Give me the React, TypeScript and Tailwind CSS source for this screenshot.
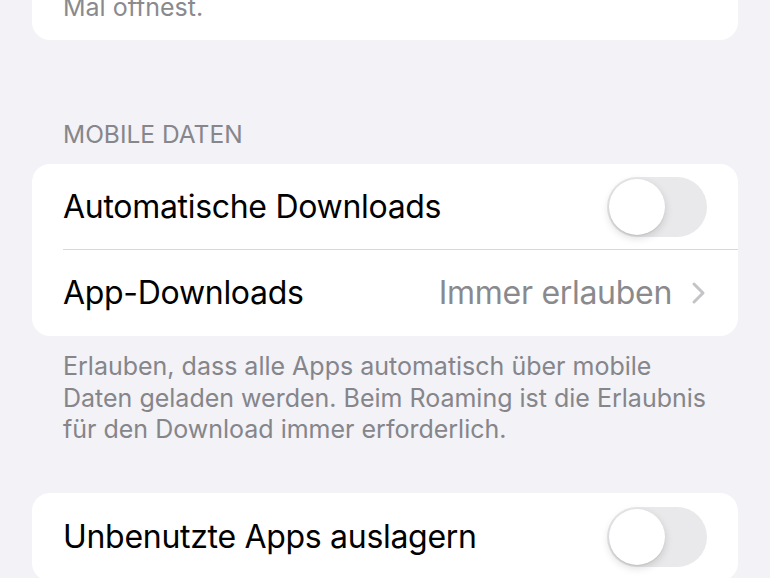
import React from "react";

const Toggle = () => (
  <div className="relative h-[60px] w-[100px] rounded-full bg-[#e9e9eb]">
    <div className="absolute left-[2px] top-[2px] h-[56px] w-[56px] rounded-full bg-white shadow-[0_3px_8px_rgba(0,0,0,0.15),0_1px_1px_rgba(0,0,0,0.08)]" />
  </div>
);

const Chevron = () => (
  <svg width="16" height="24" viewBox="0 0 16 24" fill="none">
    <path d="M3 3l9 9-9 9" stroke="#c4c4c7" strokeWidth="3" strokeLinecap="round" strokeLinejoin="round" />
  </svg>
);

export default function App() {
  return (
    <div
      className="h-[578px] w-[770px] overflow-hidden bg-[#f2f2f7] px-[32px] antialiased"
      style={{ fontFamily: "Inter, 'Noto Sans', sans-serif" }}
    >
      {/* end of the previous group */}
      <div className="-mt-[8px] rounded-b-[18px] bg-white px-[31px] pb-[17px] text-[25px] leading-[31px] text-[#8a8a8e]">
        Mal öffnest.
      </div>

      <div className="mt-[80px] mb-[16px] px-[31px] text-[24.5px] leading-[28px] text-[#86868b]">
        MOBILE DATEN
      </div>

      <div className="rounded-[18px] bg-white">
        <div className="flex h-[85px] items-center justify-between pl-[31px] pr-[31px]">
          <span className="text-[32px] tracking-[-0.3px] text-black">Automatische Downloads</span>
          <Toggle />
        </div>
        <div className="ml-[31px] h-px bg-[#d8d8dc]" />
        <div className="flex h-[86px] items-center justify-between pl-[31px] pr-[31px]">
          <span className="text-[32px] tracking-[-0.3px] text-black">App-Downloads</span>
          <div className="flex items-center gap-[19px]">
            <span className="text-[32px] tracking-[-0.3px] text-[#8a8a8e]">Immer erlauben</span>
            <Chevron />
          </div>
        </div>
      </div>

      <p className="px-[31px] pt-[15px] text-[25px] leading-[31.5px] text-[#85858a]">
        Erlauben, dass alle Apps automatisch über mobile
        <br />
        Daten geladen werden. Beim Roaming ist die Erlaubnis
        <br />
        für den Download immer erforderlich.
      </p>

      <div className="mt-[47px] rounded-[18px] bg-white">
        <div className="flex h-[88px] items-center justify-between pl-[31px] pr-[31px]">
          <span className="text-[32px] tracking-[-0.3px] text-black">Unbenutzte Apps auslagern</span>
          <Toggle />
        </div>
      </div>
    </div>
  );
}
